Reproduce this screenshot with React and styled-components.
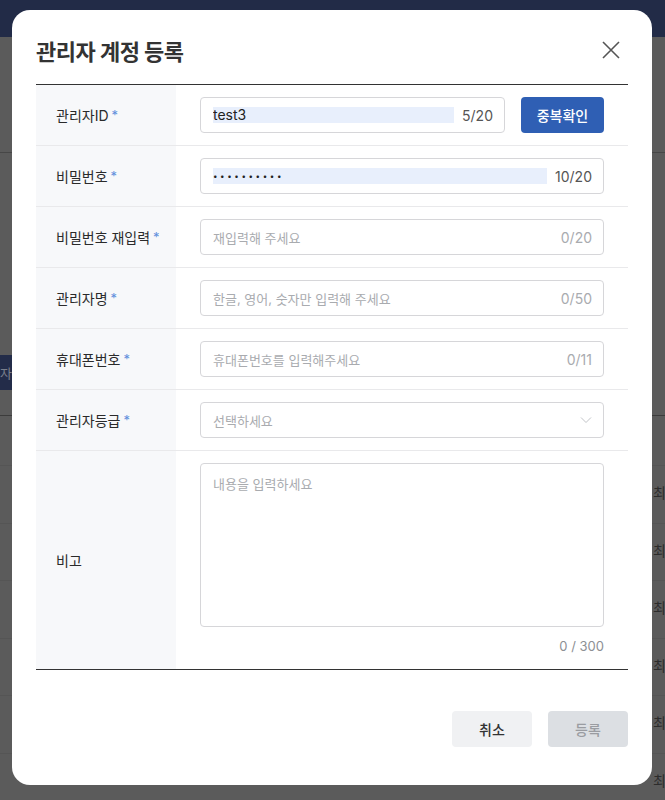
import React from 'react';
import styled, { createGlobalStyle } from 'styled-components';

const GlobalStyle = createGlobalStyle`
  html, body {
    margin: 0;
    padding: 0;
    background: #5b5b5b;
    font-family: Inter, "Noto Sans CJK KR", sans-serif;
  }
  * { box-sizing: border-box; }
`;

const fields = [
  { id: 'adminId', label: '관리자ID', value: 'test3', count: '5/20', check: true },
  { id: 'pw', label: '비밀번호', value: '••••••••••', count: '10/20', password: true },
  { id: 'pw2', label: '비밀번호 재입력', placeholder: '재입력해 주세요', count: '0/20' },
  { id: 'name', label: '관리자명', placeholder: '한글, 영어, 숫자만 입력해 주세요', count: '0/50' },
  { id: 'phone', label: '휴대폰번호', placeholder: '휴대폰번호를 입력해주세요', count: '0/11' },
];

/* dimmed page behind the modal */
const Page = styled.div`
  width: 665px;
  height: 800px;
  overflow: hidden;
  background: #5b5b5b;
`;

const TopBar = styled.div`
  height: 37px;
  background: #222b47;
`;

const Section = styled.div`
  height: 116px;
  border-bottom: 1px solid #474747;
`;

const TabRow = styled.div`
  height: 262px;
  display: flex;
  align-items: flex-end;
  padding-bottom: 25px;
`;

const Tab = styled.div`
  width: 12px;
  height: 35px;
  background: #232c49;
  color: #7a7f8c;
  font-size: 13px;
  display: flex;
  align-items: center;
  justify-content: flex-end;
  overflow: hidden;
`;

const BgTable = styled.div`
  border-top: 1px solid #3c3c3c;
`;

const BgHead = styled.div`
  height: 50px;
  border-bottom: 1px solid #555;
`;

const BgRow = styled.div`
  height: 57.5px;
  border-bottom: 1px solid #555;
  display: flex;
  align-items: center;
  justify-content: flex-end;
  padding-bottom: 4px;
  color: #2c2c2c;
  font-size: 14px;
  overflow: hidden;
  white-space: nowrap;
`;

const BgCell = styled.span`
  width: 12px;
  overflow: hidden;
`;

/* modal */
const Modal = styled.div`
  position: absolute;
  left: 12px;
  top: 10px;
  width: 640px;
  height: 775px;
  background: #fff;
  border-radius: 18px;
  padding: 0 24px;
  display: flex;
  flex-direction: column;
`;

const Header = styled.div`
  height: 74px;
  display: flex;
  align-items: center;
  justify-content: space-between;
  padding-top: 6px;
`;

const Title = styled.h2`
  margin: 0;
  font-size: 22px;
  font-weight: 700;
  color: #333;
  letter-spacing: -0.5px;
`;

const Close = styled.button`
  border: none;
  background: none;
  padding: 0;
  width: 22px;
  height: 22px;
  margin-right: 6px;
  display: flex;
  align-items: center;
  justify-content: center;
  cursor: pointer;
`;

const Table = styled.div`
  border-top: 1px solid #333;
  border-bottom: 1px solid #333;
`;

const Row = styled.div`
  display: flex;
  border-bottom: ${p => (p.$last ? 'none' : '1px solid #e9e9eb')};
`;

const Label = styled.div`
  width: 140px;
  flex-shrink: 0;
  background: #f7f8fa;
  padding-left: 20px;
  display: flex;
  align-items: center;
  font-size: 14px;
  font-weight: 400;
  color: #2a2a2a;
`;

const Star = styled.span`
  color: #5f8fdc;
  margin-left: 3px;
  font-size: 13px;
`;

const Value = styled.div`
  flex: 1;
  padding: 12px 24px;
  display: flex;
  flex-direction: ${p => (p.$column ? 'column' : 'row')};
  gap: 16px;
`;

const InputBox = styled.div`
  flex: 1;
  height: 36px;
  border: 1px solid #d6d6d9;
  border-radius: 4px;
  padding: 0 11px 0 12px;
  display: flex;
  align-items: center;
  justify-content: space-between;
  font-size: 14px;
  color: #222;
`;

const Selected = styled.span`
  background: #e8effc;
  height: 16px;
  line-height: 16px;
  width: ${p => p.$width}px;
  letter-spacing: ${p => (p.$password ? '2.6px' : '0')};
  font-size: ${p => (p.$password ? '8px' : '14px')};
  white-space: nowrap;
  overflow: hidden;
`;

const Placeholder = styled.span`
  color: #a9abaf;
  font-size: 13px;
`;

const Count = styled.span`
  color: ${p => (p.$muted ? '#a9abaf' : '#555')};
  font-size: 14px;
`;

const CheckButton = styled.button`
  width: 83px;
  height: 36px;
  border: none;
  border-radius: 4px;
  background: #2f5fb4;
  color: #fff;
  font-family: inherit;
  font-size: 14px;
  font-weight: 500;
`;

const TextArea = styled.div`
  height: 164px;
  border: 1px solid #d6d6d9;
  border-radius: 4px;
  padding: 9px 12px;
`;

const TextCount = styled.div`
  text-align: right;
  font-size: 13px;
  color: #8d8f94;
  margin-top: -5px;
  padding-bottom: 3px;
`;

const Footer = styled.div`
  display: flex;
  justify-content: flex-end;
  gap: 16px;
  padding-top: 41px;
`;

const FootButton = styled.button`
  width: 80px;
  height: 36px;
  border: none;
  border-radius: 4px;
  font-family: inherit;
  font-size: 14px;
  font-weight: 500;
  background: ${p => (p.$disabled ? '#dcdfe3' : '#f0f1f3')};
  color: ${p => (p.$disabled ? '#9a9ca1' : '#333')};
`;

const Chevron = () => (
  <svg width="12" height="8" viewBox="0 0 12 8">
    <path d="M1 1.5l5 5 5-5" fill="none" stroke="#c2c4c8" strokeWidth="1" />
  </svg>
);

export default function App() {
  return (
    <>
      <GlobalStyle />
      <Page>
        <TopBar />
        <Section />
        <TabRow>
          <Tab>자</Tab>
        </TabRow>
        <BgTable>
          <BgHead />
          {Array.from({ length: 6 }).map((_, i) => (
            <BgRow key={i}>
              <BgCell>최</BgCell>
            </BgRow>
          ))}
        </BgTable>
      </Page>

      <Modal>
        <Header>
          <Title>관리자 계정 등록</Title>
          <Close aria-label="닫기">
            <svg width="18" height="18" viewBox="0 0 18 18">
              <path d="M1 1l16 16M17 1L1 17" stroke="#555" strokeWidth="1.6" />
            </svg>
          </Close>
        </Header>

        <Table>
          {fields.map(f => (
            <Row key={f.id}>
              <Label>
                {f.label}
                <Star>*</Star>
              </Label>
              <Value>
                <InputBox>
                  {f.value ? (
                    <Selected $width={f.password ? 334 : 241} $password={f.password}>
                      {f.value}
                    </Selected>
                  ) : (
                    <Placeholder>{f.placeholder}</Placeholder>
                  )}
                  <Count $muted={!f.value}>{f.count}</Count>
                </InputBox>
                {f.check && <CheckButton>중복확인</CheckButton>}
              </Value>
            </Row>
          ))}
          <Row>
            <Label>
              관리자등급
              <Star>*</Star>
            </Label>
            <Value>
              <InputBox>
                <Placeholder>선택하세요</Placeholder>
                <Chevron />
              </InputBox>
            </Value>
          </Row>
          <Row $last>
            <Label>비고</Label>
            <Value $column>
              <TextArea>
                <Placeholder>내용을 입력하세요</Placeholder>
              </TextArea>
              <TextCount>0 / 300</TextCount>
            </Value>
          </Row>
        </Table>

        <Footer>
          <FootButton>취소</FootButton>
          <FootButton $disabled>등록</FootButton>
        </Footer>
      </Modal>
    </>
  );
}
